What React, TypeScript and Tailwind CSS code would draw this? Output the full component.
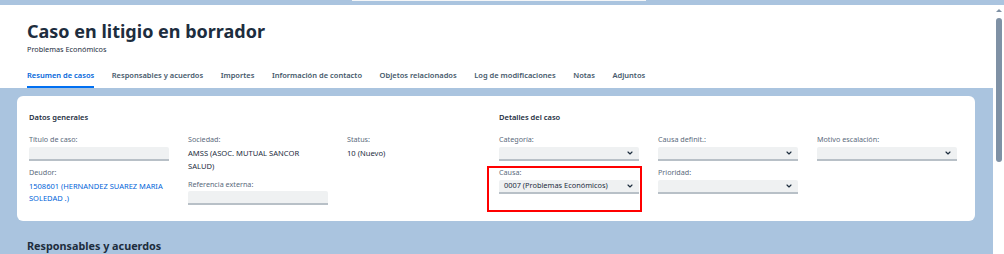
import { ChevronDown } from 'lucide-react';

const font = { fontFamily: '"Noto Sans", "Open Sans", sans-serif' };

const tabs = [
  'Resumen de casos',
  'Responsables y acuerdos',
  'Importes',
  'Información de contacto',
  'Objetos relacionados',
  'Log de modificaciones',
  'Notas',
  'Adjuntos',
];

const labelCls = 'text-[7.2px] leading-[12px] text-[#5b6b7c]';
const valueCls = 'text-[7.6px] text-[#1d2d3e]';
const inputCls = 'h-[14px] w-[140px] rounded-t-[2px] bg-[#eff1f2] border-b-2 border-[#b8c0c7]';

function Field({ label, children }: { label: string; children: React.ReactNode }) {
  return (
    <div className="flex flex-col">
      <span className={labelCls}>{label}</span>
      <div className="mt-[2px]">{children}</div>
    </div>
  );
}

function Select({ value }: { value?: string }) {
  return (
    <div className={`${inputCls} flex items-center justify-between pl-[5px] pr-[5px]`}>
      <span className="text-[7.4px] leading-none text-[#1d2d3e]">{value}</span>
      <ChevronDown size={8} strokeWidth={3.5} className="text-[#1d2d3e]" />
    </div>
  );
}

export default function App() {
  return (
    <div className="relative flex h-[254px] w-[1004px] flex-col overflow-hidden bg-white" style={font}>
      {/* top strip */}
      <div className="flex h-[5px] shrink-0 justify-center bg-[#aac4df]">
        <div className="ml-[-6px] h-[1px] w-[294px] bg-[#f4f6f8]" />
      </div>

      <div className="flex flex-1">
        <div className="flex w-[993px] flex-col">
          {/* Header */}
          <div className="h-[83px] shrink-0 bg-white pl-[27px] pt-[15px]">
            <h1 className="text-[18px] font-bold leading-[22px] text-[#1d2d3e]">
              Caso en litigio en borrador
            </h1>
            <p className="mt-[1px] text-[7.3px] leading-[12px] text-[#1d2d3e]">Problemas Económicos</p>
            <div className="mt-[13px] flex gap-[17.5px]">
              {tabs.map((t, i) => (
                <div
                  key={t}
                  className={`h-[20px] pt-[1px] text-[7.5px] font-semibold leading-[12px] ${
                    i === 0 ? 'border-b-2 border-[#0070f2] text-[#0064d9]' : 'text-[#46596b]'
                  }`}
                >
                  {t}
                </div>
              ))}
            </div>
          </div>

          {/* Content */}
          <div className="flex-1 bg-[#aac4df] pl-[17px] pr-[18px] pt-[8px]">
            <div className="relative h-[125px] rounded-[6px] bg-white pl-[12px] pt-[15px]">
              <div className="flex">
                {/* Datos generales */}
                <div className="w-[470px]">
                  <h2 className="text-[7.5px] font-semibold leading-[12px] text-[#1d2d3e]">Datos generales</h2>
                  <div className="mt-[10px] grid grid-cols-[140px_140px_140px] gap-x-[19px]">
                    <div className="flex flex-col gap-[5px]">
                      <Field label="Título de caso:">
                        <div className={inputCls} />
                      </Field>
                      <Field label="Deudor:">
                        <div className="text-[7.5px] leading-[12px] text-[#0064d9]">
                          1508601 (HERNANDEZ SUAREZ MARIA SOLEDAD .)
                        </div>
                      </Field>
                    </div>
                    <div className="flex flex-col">
                      <span className={labelCls}>Sociedad:</span>
                      <div className={`${valueCls} mt-[2px] w-[122px] leading-[13px]`}>
                        AMSS (ASOC. MUTUAL SANCOR SALUD)
                      </div>
                      <span className={`${labelCls} mt-[5px]`}>Referencia externa:</span>
                      <div className={`${inputCls} mt-[1px]`} />
                    </div>
                    <div className="flex flex-col">
                      <span className={labelCls}>Status:</span>
                      <div className={`${valueCls} mt-[2px] leading-[13px]`}>10 (Nuevo)</div>
                    </div>
                  </div>
                </div>

                {/* Detalles del caso */}
                <div>
                  <h2 className="text-[7.5px] font-semibold leading-[12px] text-[#1d2d3e]">Detalles del caso</h2>
                  <div className="mt-[10px] grid grid-cols-[140px_140px_140px] gap-x-[19px]">
                    <div className="flex flex-col gap-[5px]">
                      <Field label="Categoría:">
                        <Select />
                      </Field>
                      <Field label="Causa:">
                        <Select value="0007 (Problemas Económicos)" />
                      </Field>
                    </div>
                    <div className="flex flex-col gap-[5px]">
                      <Field label="Causa definit.:">
                        <Select />
                      </Field>
                      <Field label="Prioridad:">
                        <Select />
                      </Field>
                    </div>
                    <div className="flex flex-col">
                      <Field label="Motivo escalación:">
                        <Select />
                      </Field>
                    </div>
                  </div>
                </div>
              </div>

              {/* annotation */}
              <div className="absolute left-[470px] top-[70px] h-[46px] w-[155px] border-2 border-[#ff0000]" />
            </div>

            <h2 className="mt-[17px] pl-[10px] text-[10.8px] font-bold leading-[16px] text-[#1d2d3e]">
              Responsables y acuerdos
            </h2>
          </div>
        </div>

        {/* scrollbar */}
        <div className="flex w-[11px] flex-col items-center bg-white pt-[4px]">
          <div className="h-0 w-0 border-x-[3px] border-b-[3px] border-x-transparent border-b-[#7f91a5]" />
          <div className="mt-[6px] h-[144px] w-[6px] rounded-full bg-[#7f91a5]" />
        </div>
      </div>
    </div>
  );
}
